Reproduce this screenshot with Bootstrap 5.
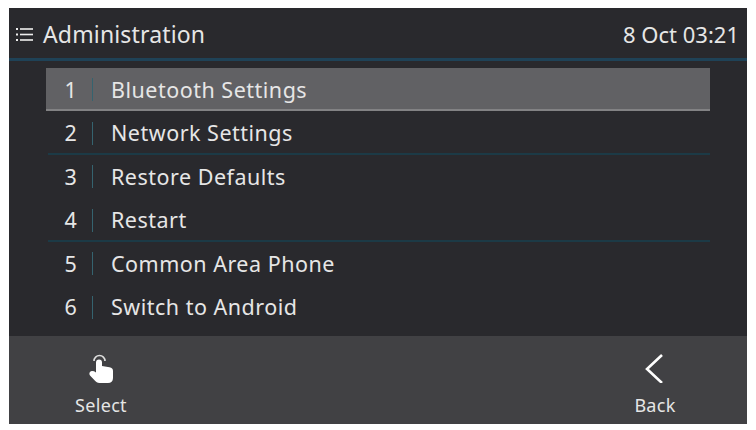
<!DOCTYPE html>
<html lang="en">
  <head>
    <meta charset="UTF-8" />
    <meta name="viewport" content="width=device-width, initial-scale=1.0" />
    <title>Administration</title>
    <link
      href="https://cdn.jsdelivr.net/npm/bootstrap@5.3.0/dist/css/bootstrap.min.css"
      rel="stylesheet"
    />
    <script src="https://cdn.jsdelivr.net/npm/bootstrap@5.3.0/dist/js/bootstrap.bundle.min.js"></script>
    <style>
      body {
        background: #fff;
        font-family: "Noto Sans", sans-serif;
        overflow: hidden;
      }
      .phone-screen {
        width: 738px;
        height: 416px;
        margin: 8px 0 0 9px;
        background: #29292d;
        color: #e6e6e6;
      }
      .top-bar {
        height: 53px;
        padding: 3px 8px 0 7px;
        border-bottom: 3px solid #1f4257;
      }
      .title-group {
        gap: 9px;
      }
      .top-title {
        font-size: 23px;
        letter-spacing: 0.15px;
      }
      .top-time {
        font-size: 22px;
      }
      .menu-wrap {
        height: 275px;
        padding: 7px 37px 0 37px;
      }
      .menu-row {
        height: 43.4px;
        font-size: 21.5px;
        padding-top: 1px;
        padding-left: 18px;
        letter-spacing: 0.5px;
      }
      .menu-row.active-row {
        background: #616164;
        border-bottom: 2px solid #828284;
        padding-top: 2px;
      }
      .menu-row.rule-row {
        border-bottom: 2px solid #1c3a46;
        margin-left: 2px;
        padding-left: 16px;
        padding-top: 3px;
      }
      .row-num {
        width: 14px;
        text-align: center;
      }
      .row-sep {
        width: 1px;
        height: 23px;
        background: #35636f;
        margin: 0 18px 0 14px;
      }
      .soft-bar {
        height: 88px;
        background: #414144;
      }
      .soft-key {
        width: 184px;
        font-size: 18px;
        letter-spacing: 0.3px;
        padding-top: 13px;
      }
      .soft-key svg {
        display: block;
      }
      .soft-icon {
        height: 43px;
        padding-top: 4px;
      }
    </style>
  </head>
  <body>
    <div class="phone-screen d-flex flex-column">
      <div class="top-bar d-flex align-items-center justify-content-between">
        <div class="title-group d-flex align-items-center">
          <svg width="18" height="15" viewBox="0 0 18 15">
            <g fill="#eee">
              <rect x="0" y="1" width="2" height="2" />
              <rect x="0" y="6.5" width="2" height="2" />
              <rect x="0" y="12" width="2" height="2" />
              <rect x="4" y="1.2" width="13" height="1.6" />
              <rect x="4" y="6.7" width="13" height="1.6" />
              <rect x="4" y="12.2" width="13" height="1.6" />
            </g>
          </svg>
          <span class="top-title">Administration</span>
        </div>
        <span class="top-time">8 Oct 03:21</span>
      </div>

      <div class="menu-wrap">
        <div class="menu-row active-row d-flex align-items-center">
          <span class="row-num">1</span><span class="row-sep"></span><span>Bluetooth Settings</span>
        </div>
        <div class="menu-row rule-row d-flex align-items-center">
          <span class="row-num">2</span><span class="row-sep"></span><span>Network Settings</span>
        </div>
        <div class="menu-row d-flex align-items-center">
          <span class="row-num">3</span><span class="row-sep"></span><span>Restore Defaults</span>
        </div>
        <div class="menu-row rule-row d-flex align-items-center">
          <span class="row-num">4</span><span class="row-sep"></span><span>Restart</span>
        </div>
        <div class="menu-row d-flex align-items-center">
          <span class="row-num">5</span><span class="row-sep"></span><span>Common Area Phone</span>
        </div>
        <div class="menu-row d-flex align-items-center">
          <span class="row-num">6</span><span class="row-sep"></span><span>Switch to Android</span>
        </div>
      </div>

      <div class="soft-bar d-flex justify-content-between">
        <div class="soft-key d-flex flex-column align-items-center">
          <div class="soft-icon d-flex align-items-start">
            <svg width="28" height="32" viewBox="0 0 28 32">
              <path d="M7 8 A5.5 5.5 0 0 1 18 8" fill="none" stroke="#ddd" stroke-width="1.6" />
              <path d="M9 9.5 a3 3 0 0 1 6 0 V13 l7.5 1.2 c2.4 .4 3.5 1.6 3.5 3.8 V25 c0 3.2-2 5-5 5 H12.5 c-2.2 0-3.5-1-4.5-2.2 L3 22.5 c-1.2-1.5-.6-4 1.2-4.3 1.6-.3 3.3 .2 4.8 1.3 Z" fill="#fff" />
            </svg>
          </div>
          <span>Select</span>
        </div>
        <div class="soft-key d-flex flex-column align-items-center">
          <div class="soft-icon d-flex align-items-start">
            <svg width="20" height="30" viewBox="0 0 20 30">
              <path d="M17 2 L2 16 L17 30" fill="none" stroke="#fff" stroke-width="2.6" />
            </svg>
          </div>
          <span>Back</span>
        </div>
      </div>
    </div>
  </body>
</html>
